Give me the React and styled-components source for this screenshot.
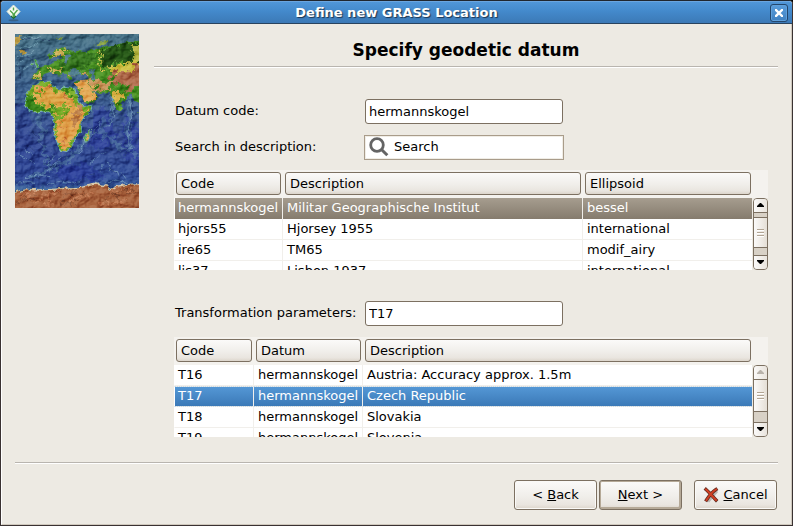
import React from "react";
import styled, { createGlobalStyle, css } from "styled-components";

const GlobalStyle = createGlobalStyle`
  *, *::before, *::after { box-sizing: border-box; }
  body {
    margin: 0;
    background: #000;
    color: #000;
    font: 13px/16px "DejaVu Sans", Verdana, sans-serif;
  }
  button, input { font: inherit; color: inherit; }
`;

const line = "#7c7061";

const Window = styled.div`
  display: flex;
  flex-direction: column;
  min-height: 100vh;
  border: 1px solid #3a3232;
  border-top-color: #20262e;
  border-radius: 4px 4px 0 0;
  background: #edeae3;
`;

const TitleBar = styled.header`
  display: grid;
  grid-template-columns: 24px 1fr 24px;
  align-items: center;
  height: 23px;
  border-top: 1px solid #6aa5df;
  border-bottom: 1px solid #29435e;
  border-radius: 3px 3px 0 0;
  background: linear-gradient(#5096d8, #4389cb 45%, #3c79b6);
`;

const WindowTitle = styled.div`
  color: #fff;
  font-weight: bold;
  text-align: center;
  text-shadow: 1px 1px 1px #1c3550;
`;

const LogoSlot = styled.div`
  display: flex;
  padding-left: 4px;
`;

const CloseButton = styled.button`
  display: grid;
  place-items: center;
  width: 18px;
  height: 18px;
  margin-left: 2px;
  padding: 0;
  border: 1px solid #23466c;
  border-radius: 3px;
  background: linear-gradient(#5a9ddb, #3f80c0);
  box-shadow: inset 0 0 0 1px #5fa0dc;
`;

const Main = styled.main`
  display: flex;
  flex: 1;
  flex-direction: column;
  padding: 10px 13px 14px 13px;
  border: solid;
  border-width: 0 1px 1px;
  border-color: #fff #cfc8bd #cfc8bd #fff;
`;

const Page = styled.section`
  display: grid;
  flex: 1;
  grid-template-columns: 124px 1fr;
  column-gap: 15px;
  align-items: start;
`;

const Rule = styled.hr`
  width: 100%;
  height: 2px;
  margin: 0;
  border: 0;
  border-top: 1px solid #b9b5af;
  border-bottom: 1px solid #fff;
`;

const Heading = styled.h1`
  margin: 0;
  padding: 5px 0;
  font-size: 17px;
  line-height: 22px;
  text-align: center;
`;

const Content = styled.div`
  display: flex;
  flex-direction: column;
  gap: 10px;
  padding: 30px 10px 0 20px;
`;

const Field = styled.div`
  display: grid;
  grid-template-columns: 190px 200px;
  align-items: center;
  min-height: ${(p) => (p.$apart ? "28px" : "26px")};
  padding-left: 1px;
  margin-top: ${(p) => (p.$apart ? "19px" : "0")};
`;

const TextBox = styled.input`
  width: 198px;
  height: 25px;
  padding: 0 3px;
  border: 1px solid ${line};
  border-radius: 3px;
  background: #fff;
  outline: none;
`;

const SearchBox = styled.div`
  display: flex;
  align-items: center;
  width: 200px;
  height: 25px;
  margin-left: -1px;
  padding-left: 4px;
  border: 1px solid #a99c8a;
  background: #fff;
  box-shadow: inset 0 0 0 1px #f0ede6;
`;

const SearchInput = styled.input`
  flex: 1;
  min-width: 0;
  padding: 0 5px;
  border: 0;
  background: transparent;
  outline: none;
`;

const ListPanel = styled.div`
  display: grid;
  grid-template-columns: 1fr 16px;
  height: 100px;
  overflow: hidden;
  background: linear-gradient(#f4f2ee 28px, #edeae3 28px);
`;

const ListClip = styled.div`
  height: 100px;
  overflow: hidden;
`;

const Table = styled.table`
  width: 100%;
  border-spacing: 0;
  table-layout: fixed;
`;

const Column = styled.col`
  width: ${(p) => (p.$width ? `${p.$width}px` : "auto")};
`;

const HeaderCell = styled.th`
  height: 28px;
  padding: 2px 2px 3px;
  font-weight: normal;
  &:last-child { padding-right: 1px; }
`;

const bevel = css`
  border: 1px solid ${line};
  border-radius: 3px;
  background: linear-gradient(#fbfaf9, #f0eeea 55%, #e9e5df 85%, #dcd5cb);
`;

const SortButton = styled.button`
  ${bevel}
  display: block;
  width: 100%;
  height: 23px;
  padding: 0 4px;
  text-align: left;
`;

const Cell = styled.td`
  height: 21px;
  padding: 0 3px 0 4px;
  overflow: hidden;
  border-right: 1px solid #f1efeb;
  border-bottom: 1px solid #f1efeb;
  background: #fff;
  line-height: 20px;
  vertical-align: top;
  white-space: nowrap;
  &:first-child { border-left: 1px solid #fff; padding-left: 3px; }
  &:last-child { border-right: 0; }
`;

const Row = styled.tr`
  ${(p) => p.$tone === "inactive" && css`
    ${Cell} {
      border-bottom: 0;
      color: #fff;
      background: linear-gradient(#a69d8f, #857b6d);
      background-clip: padding-box;
    }
  `}
  ${(p) => p.$tone === "active" && css`
    ${Cell} {
      border-top: 1px dotted #c7d9e8;
      border-bottom: 1px dotted #c7d9e8;
      color: #fff;
      background: linear-gradient(#5497d5, #3b79b7);
      background-clip: padding-box;
      line-height: 18px;
    }
    ${Cell}:first-child { border-left: 1px solid #fff; }
  `}
`;

const ScrollBar = styled.div`
  display: flex;
  flex-direction: column;
  width: 15px;
  height: 72px;
  margin: 28px 0 0 1px;
  overflow: hidden;
  border: 1px solid ${line};
  border-radius: 4px;
  background: #d8d1c6;
`;

const ScrollButton = styled.button`
  display: grid;
  place-items: center;
  height: 14px;
  flex: none;
  padding: 0;
  border: 0 solid ${line};
  border-width: ${(p) => (p.$end ? "1px 0 0" : "0 0 1px")};
  background: linear-gradient(90deg, #fbfaf9, #e9e4dd);
`;

const Thumb = styled.div`
  display: flex;
  flex: none;
  flex-direction: column;
  align-items: center;
  justify-content: center;
  gap: 2px;
  height: ${(p) => (p.$top ? 31 : 32)}px;
  margin-top: ${(p) => p.$top}px;
  margin-bottom: auto;
  border: solid ${line};
  border-width: ${(p) => (p.$top ? "1px 0" : "0 0 1px")};
  background: linear-gradient(90deg, #fbfaf9, #e5dfd6);
`;

const Grip = styled.span`
  width: 7px;
  height: 1px;
  background: #b2a594;
  box-shadow: 0 1px #fff;
`;

const Actions = styled.footer`
  display: flex;
  justify-content: flex-end;
  gap: 2px;
  padding: 16px 1px 0 0;
`;

const ActionButton = styled.button`
  ${bevel}
  display: flex;
  align-items: center;
  justify-content: center;
  gap: 4px;
  width: 83px;
  height: 30px;
  padding: 0;
  margin-left: ${(p) => (p.$apart ? "10px" : "0")};
  box-shadow: ${(p) =>
    p.$primary ? "inset 0 0 0 1px #b5a997, inset -1px -1px 0 1px #b5a997" : "inset 0 0 0 1px #faf9f7"};
`;

const GrassLogo = () => (
  <svg width="17" height="18" viewBox="0 0 17 18" aria-hidden="true">
    <ellipse cx="8.500" cy="16.3" rx="5" ry="1" fill="#33536f" opacity=".65" />
    <path d="M8.500 1 15 7.500 8.500 14.500 2 7.500Z" fill="#f7faf3" stroke="#dfe8d5" />
    <path d="M5 6.500 8 9.500 8.500 14M12.500 6 9.500 9.500 9 14M8.500 3.500v3" fill="none" stroke="#4fa548" strokeWidth="1.4" />
    <path d="M6 12 8.500 14.500 11 12" fill="none" stroke="#226b30" strokeWidth="1.2" />
  </svg>
);

const CloseIcon = () => (
  <svg width="8" height="8" viewBox="0 0 8 8" aria-hidden="true">
    <path d="M1 1 7 7M7 1 1 7" stroke="#fff" strokeWidth="2.4" strokeLinecap="square" />
  </svg>
);

const Magnifier = () => (
  <svg width="20" height="20" viewBox="0 0 20 20" aria-hidden="true">
    <circle cx="8" cy="8" r="6.3" fill="#fff" stroke="#646464" strokeWidth="2.8" />
    <path d="m12.5 12.5 5.8 5.8" stroke="#646464" strokeWidth="3" />
  </svg>
);

const Arrow = ({ down, dim }) => (
  <svg width="8" height="5" viewBox="0 0 8 5" aria-hidden="true">
    <path d={down ? "M0 0H7V1L4 4H3L0 1Z" : "M0 4H7V3L4 0H3L0 3Z"} fill={dim ? "#b8b2aa" : "#000"} />
  </svg>
);

const CancelIcon = () => (
  <svg width="16" height="16" viewBox="0 0 16 16" aria-hidden="true">
    <path d="M4.500 4 14 14.500M14 4 5 14.500" stroke="#8b857e" strokeWidth="3" opacity=".5" />
    <path d="M3 2.500C6 5 9 9 13 13M13 2.500C9 5 6 9 3.500 13" fill="none" stroke="#5e2b22" strokeWidth="3.400" strokeLinecap="square" />
    <path d="M3 2.500C6 5 9 9 13 13M13 2.500C9 5 6 9 3.500 13" fill="none" stroke="#cf3f22" strokeWidth="2" strokeLinecap="square" />
  </svg>
);

const WorldMap = () => (
  <svg width="124" height="174" viewBox="45 102 372 522" role="img" aria-label="Relief map of Africa and Eurasia">
    <defs>
      <linearGradient id="sea" x2="0" y2="1">
        <stop offset="0" stopColor="#497487" />
        <stop offset=".3" stopColor="#3f648f" />
        <stop offset=".6" stopColor="#364d94" />
        <stop offset=".82" stopColor="#334f9a" />
        <stop offset="1" stopColor="#467d98" />
      </linearGradient>
      <filter id="relief" x="0" y="0" width="100%" height="100%" colorInterpolationFilters="sRGB">
        <feTurbulence type="fractalNoise" baseFrequency=".03 .04" numOctaves="4" seed="7" result="n" />
        <feDiffuseLighting in="n" surfaceScale="11" diffuseConstant=".64" lightingColor="#fff" result="l">
          <feDistantLight azimuth="225" elevation="52" />
        </feDiffuseLighting>
        <feBlend in="l" in2="SourceGraphic" mode="soft-light" />
      </filter>
      <filter id="coast" x="-10%" y="-10%" width="120%" height="120%" colorInterpolationFilters="sRGB">
        <feTurbulence type="fractalNoise" baseFrequency=".07" numOctaves="3" seed="3" result="n" />
        <feDisplacementMap in="SourceGraphic" in2="n" scale="14" xChannelSelector="R" yChannelSelector="G" />
      </filter>
      <filter id="ground" x="-10%" y="-10%" width="120%" height="120%" colorInterpolationFilters="sRGB">
        <feTurbulence type="fractalNoise" baseFrequency=".06" numOctaves="3" seed="11" result="n" />
        <feDisplacementMap in="SourceGraphic" in2="n" scale="44" xChannelSelector="R" yChannelSelector="G" />
        <feGaussianBlur stdDeviation="2" />
      </filter>
      <clipPath id="frame"><path d="M45 102H417V624H45Z" /></clipPath>
      <clipPath id="africa">
        <path d="M97 256 125 246 152 244 156 260 180 270 190 263 224 268 230 287 240 310 250 322 275 317 271 335 241 366 244 393 222 415 214 440 196 453 180 450 171 422 161 400 166 370 160 350 152 336 130 331 105 338 85 325 76 308 80 285 90 265Z" />
      </clipPath>
      <clipPath id="eurasia">
        <path d="M430 124 385 126 350 134 318 138 300 146 274 148 258 156 236 154 226 158 204 148 188 142 168 150 145 168 150 178 178 164 184 172 164 187 145 195 126 200 116 211 98 222 97 237 121 239 132 222 150 216 168 221 178 232 184 218 199 218 205 237 216 239 211 226 235 225 263 224 270 235 245 238 229 242 227 255 240 285 250 311 278 307 299 293 285 280 268 268 284 275 300 282 327 278 339 290 346 321 358 335 367 310 382 292 394 279 402 300 430 312Z" />
      </clipPath>
    </defs>
    <g filter="url(#relief)" clipPath="url(#frame)">
      <path d="M45 102H417V624H45Z" fill="url(#sea)" />
      <g filter="url(#ground)">
        <path d="M45 300C90 320 100 350 85 390S140 430 180 475L270 520 315 555H45Z" fill="#2c4092" opacity=".5" />
        <path d="M280 320 330 330 350 420 300 450 262 440ZM370 340 417 370V500L370 460ZM170 500 260 490 320 535 180 540Z" fill="#2b3c9c" opacity=".6" />
        <path d="M110 335C140 380 105 440 150 500M335 285C360 350 315 370 260 425S175 510 90 530M388 290C395 350 380 395 390 450M300 395C335 410 350 450 417 465" fill="none" stroke="#5e8fa6" strokeWidth="12" opacity=".4" />
      </g>
      <g fill="none" stroke="#8fbccb" strokeWidth="2.4" opacity=".65" filter="url(#coast)">
        <path d="M66 118 86 109 101 116 124 110M55 148 76 139 90 143 114 126M49 174 73 163 89 168 101 153M50 194 70 183M65 207 85 199M330 283 342 302 341 345 326 381M338 295 330 335M388 297 394 340 384 395 388 447 400 449M303 366 285 390 278 405M259 404 249 435 240 461M55 465 83 478 104 491M73 447 97 467M164 467 139 498M184 470 160 500 133 518M78 533 115 525 151 530M320 489 334 496 328 511 351 515 360 535M310 494 300 512M366 520 378 536M46 550 78 546 108 547M144 554 183 543 221 550 244 543M280 548 309 556 347 540 382 548M270 490 302 463 326 457" />
      </g>
      <g stroke="#1d3164" strokeWidth="3" fill="none" opacity=".5" filter="url(#coast)">
        <path d="M69 122 92 113M59 151 87 147M83 433 107 456M92 391 119 414M176 475 150 505M284 394 271 425M347 305 346 341M392 302 399 337 389 390M325 505 351 521M285 520 247 533M80 537 128 530M58 200 62 240M100 118 150 122M75 170 95 176" />
      </g>
      <g filter="url(#coast)">
        <path d="M102 181 106 178 115 190 119 201 105 202 108 193ZM94 186 101 189 98 198 91 197ZM272 389 267 416 259 429 253 420 258 401Z" fill="#479e32" stroke="#87b8b4" strokeWidth="2" />
        <path d="M268 395 265 412 259 424 258 408Z" fill="#dca552" />
        <path d="M45 108 66 106 58 116 65 121 50 135 45 132ZM57 154 73 151 78 159 63 162Z" fill="#ba9a42" />
        <path d="M161 119 190 111 185 119ZM280 136 303 126 329 122 324 128 301 134Z" fill="#8aa447" />
        <path d="M98 257 125 247 152 245 156 260 180 270 190 263 224 268 230 287 240 310 250 322 275 317 271 335 241 366 244 393 222 415 214 440 196 453 180 450 171 422 161 400 166 370 160 350 152 336 130 331 105 338 85 325 76 308 80 285Z" fill="none" stroke="#77b6b9" strokeWidth="5" />
        <g clipPath="url(#africa)">
          <path d="M70 240H280V460H70Z" fill="#76ab26" />
          <g filter="url(#ground)">
            <path d="M96 264 150 255 172 280 211 281 225 312 190 325 178 315 153 328 132 315 101 303Z" fill="#dfa94c" />
            <path d="M76 285 96 290 112 318 150 328 160 318 170 330 140 336 102 342 75 320ZM175 255 229 263 224 276 184 274Z" fill="#398519" />
            <path d="M160 340 203 340 214 315 232 310 251 327 270 323 248 358 239 396 210 438 187 453 173 413 164 397 173 372Z" fill="#e1a34d" />
            <path d="M232 310 249 324 240 365 222 380 216 358 228 338Z" fill="#c0834c" />
            <path d="M169 342 193 343 193 360 174 366ZM103 276 122 271 128 285 111 288ZM232 387 250 389 220 430Z" fill="#6ba622" />
            <path d="M116 263 151 261M180 380 200 385M185 431 205 414M196 285 208 298" stroke="#cf7f48" strokeWidth="6" />
          </g>
        </g>
        <g clipPath="url(#eurasia)">
          <path d="M90 115H440V340H90Z" fill="#4a9224" />
          <g filter="url(#ground)">
            <path d="M301 150 335 136 420 120V195L382 196 355 182 323 210 305 196Z" fill="#245516" />
            <path d="M190 172 245 155 300 168 277 197 220 206 170 211Z" fill="#3a7a22" />
            <path d="M148 169 180 155 210 148 185 169 155 183ZM97 222 124 216 128 235 103 237ZM145 207 172 205 194 224 168 219Z" fill="#cfb25b" />
            <path d="M390 138 430 138 430 188 393 183 405 164ZM304 150 309 151 300 203 296 202Z" fill="#b7b745" />
            <path d="M209 226 265 224 284 240 339 244 330 270 276 268 263 244 222 243Z" fill="#c8965c" />
            <path d="M230 240 257 246 283 275 296 292 266 308 246 310Z" fill="#e3aa57" />
            <path d="M315 204 345 199 378 190 430 188V220L350 225Z" fill="#cfc044" />
            <path d="M325 234 350 214 383 218 415 195 440 200V265L386 263 350 252Z" fill="#b26e4e" />
            <path d="M333 252 382 266 434 272V297L398 278 374 288 360 335Z" fill="#418c1e" />
            <path d="M342 274 365 282 355 316 346 303Z" fill="#d7b347" />
          </g>
        </g>
        <path d="M208 214 223 207 239 216 248 222 226 225 208 224ZM266 207 283 210 286 239 274 241 275 225ZM196 162 216 165 205 176 199 192 190 187Z" fill="#527f91" />
        <path d="M358 318 367 325 364 335 358 332ZM410 332 425 340V350Z" fill="#68ad35" />
        <path d="M45 576 84 568 117 570 158 568 202 564 244 562 285 552 323 558 328 570 349 559 378 554 430 550V640H30V576Z" fill="#a9643f" stroke="#d5c6a5" strokeWidth="4" />
        <g filter="url(#ground)" fill="none" stroke="#d9916a" strokeWidth="6" opacity=".5">
          <path d="M65 585 98 578M133 581 184 575M213 598 285 574M300 615 390 601M340 576 396 568M103 608 143 602M146 591 150 618" />
        </g>
        <g filter="url(#ground)" fill="none" stroke="#71402b" strokeWidth="6" opacity=".5">
          <path d="M60 600 105 594M190 584 247 579M315 599 357 582M376 580 420 571M180 612 242 605" />
        </g>
      </g>
    </g>
  </svg>
);

const datums = {
  columns: [["Code", 109], ["Description", 0], ["Ellipsoid", 169]],
  rows: [
    ["hermannskogel", "Militar Geographische Institut", "bessel"],
    ["hjors55", "Hjorsey 1955", "international"],
    ["ire65", "TM65", "modif_airy"],
    ["lis37", "Lisbon 1937", "international"],
  ],
};

const transforms = {
  columns: [["Code", 80], ["Datum", 109], ["Description", 0]],
  rows: [
    ["T16", "hermannskogel", "Austria: Accuracy approx. 1.5m"],
    ["T17", "hermannskogel", "Czech Republic"],
    ["T18", "hermannskogel", "Slovakia"],
    ["T19", "hermannskogel", "Slovenia"],
  ],
};

function ListView({ label, data, selected, tone, thumbTop }) {
  return (
    <ListPanel>
      <ListClip>
        <Table aria-label={label}>
          <colgroup>
            {data.columns.map(([name, width]) => <Column key={name} $width={width} />)}
          </colgroup>
          <thead>
            <tr>
              {data.columns.map(([name]) => (
                <HeaderCell key={name} scope="col"><SortButton type="button">{name}</SortButton></HeaderCell>
              ))}
            </tr>
          </thead>
          <tbody>
            {data.rows.map((row, i) => (
              <Row key={row[0]} $tone={i === selected ? tone : undefined} aria-selected={i === selected}>
                {row.map((text) => <Cell key={text}>{text}</Cell>)}
              </Row>
            ))}
          </tbody>
        </Table>
      </ListClip>
      <ScrollBar>
        <ScrollButton type="button" aria-label="Scroll up"><Arrow dim={!thumbTop} /></ScrollButton>
        <Thumb $top={thumbTop}><Grip /><Grip /><Grip /></Thumb>
        <ScrollButton type="button" aria-label="Scroll down" $end><Arrow down /></ScrollButton>
      </ScrollBar>
    </ListPanel>
  );
}

export default function App() {
  return (
    <>
      <GlobalStyle />
      <Window>
        <TitleBar>
          <LogoSlot><GrassLogo /></LogoSlot>
          <WindowTitle>Define new GRASS Location</WindowTitle>
          <CloseButton type="button" aria-label="Close"><CloseIcon /></CloseButton>
        </TitleBar>
        <Main>
          <Page>
            <WorldMap />
            <div>
              <Heading>Specify geodetic datum</Heading>
              <Rule />
              <Content>
                <Field>
                  <label htmlFor="datum">Datum code:</label>
                  <TextBox id="datum" defaultValue="hermannskogel" />
                </Field>
                <Field>
                  <label htmlFor="search">Search in description:</label>
                  <SearchBox>
                    <Magnifier />
                    <SearchInput id="search" defaultValue="Search" />
                  </SearchBox>
                </Field>
                <ListView label="Datums" data={datums} selected={0} tone="inactive" thumbTop={4} />
                <Field $apart>
                  <label htmlFor="transform">Transformation parameters:</label>
                  <TextBox id="transform" defaultValue="T17" />
                </Field>
                <ListView label="Datum transformations" data={transforms} selected={1} tone="active" thumbTop={0} />
              </Content>
            </div>
          </Page>
          <Rule />
          <Actions>
            <ActionButton type="button"><span>&lt; <u>B</u>ack</span></ActionButton>
            <ActionButton type="button" $primary><span><u>N</u>ext &gt;</span></ActionButton>
            <ActionButton type="button" $apart><CancelIcon /><span><u>C</u>ancel</span></ActionButton>
          </Actions>
        </Main>
      </Window>
    </>
  );
}
